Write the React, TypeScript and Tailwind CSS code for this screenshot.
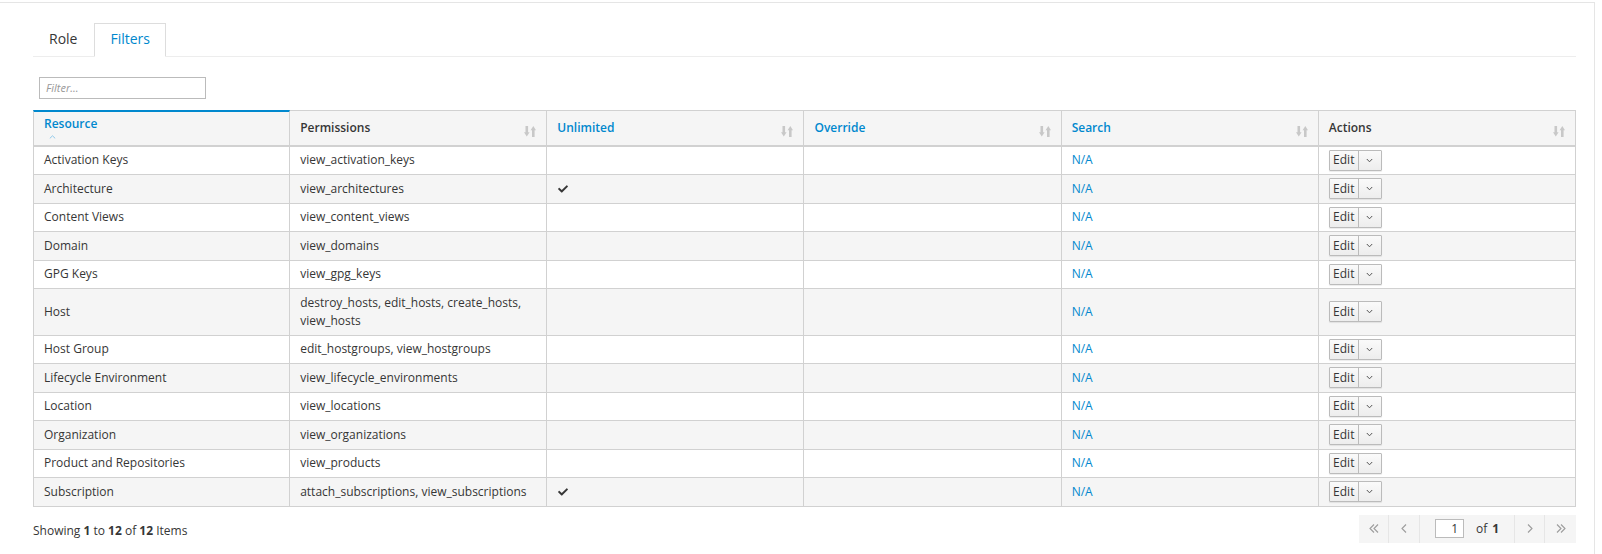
import React from "react";
import { FaCheck } from "react-icons/fa";

type Row = { resource: string; perms: string; unlimited?: boolean };

const rows: Row[] = [
  { resource: "Activation Keys", perms: "view_activation_keys" },
  { resource: "Architecture", perms: "view_architectures", unlimited: true },
  { resource: "Content Views", perms: "view_content_views" },
  { resource: "Domain", perms: "view_domains" },
  { resource: "GPG Keys", perms: "view_gpg_keys" },
  { resource: "Host", perms: "destroy_hosts, edit_hosts, create_hosts, view_hosts" },
  { resource: "Host Group", perms: "edit_hostgroups, view_hostgroups" },
  { resource: "Lifecycle Environment", perms: "view_lifecycle_environments" },
  { resource: "Location", perms: "view_locations" },
  { resource: "Organization", perms: "view_organizations" },
  { resource: "Product and Repositories", perms: "view_products" },
  { resource: "Subscription", perms: "attach_subscriptions, view_subscriptions", unlimited: true },
];

function SortIcon() {
  return (
    <svg width="12" height="11" viewBox="0 0 12 11" className="shrink-0 mt-[8px]" fill="#c8c8c8">
      <rect x="1.5" y="0" width="2.6" height="7" />
      <polygon points="0,6.3 5.6,6.3 2.8,10.6" />
      <polygon points="6.6,4.3 12,4.3 9.3,0" />
      <rect x="8" y="3.8" width="2.6" height="7.2" />
    </svg>
  );
}

function HeaderCell({ label, blue }: { label: string; blue?: boolean }) {
  return (
    <th className="bg-[#f5f5f5] border-t border-t-[#d1d1d1] border-b-2 border-b-[#d1d1d1] border-r border-r-[#d1d1d1] px-[10px] py-[7.35px] text-left align-middle font-semibold">
      <div className="flex items-center justify-between">
        <span className={blue ? "text-[#0088ce] leading-[18px]" : "text-[#363636] leading-[18px]"}>{label}</span>
        <SortIcon />
      </div>
    </th>
  );
}

function EditButton() {
  return (
    <div className="h-[18px] flex items-center">
      <div className="flex h-[21px] border border-[#bbbbbb] rounded-[1px] bg-gradient-to-b from-[#fafafa] to-[#ededed] shadow-[0_1px_1px_rgba(3,3,3,0.08)]">
        <div className="w-[29px] flex items-center justify-center text-[12px] font-medium text-[#363636] border-r border-[#bbbbbb] leading-none">
          Edit
        </div>
        <div className="w-[22px] flex items-center justify-center">
          <svg width="7" height="5" viewBox="0 0 7 5">
            <polyline points="0.8,1 3.5,3.8 6.2,1" fill="none" stroke="#555" strokeWidth="1" />
          </svg>
        </div>
      </div>
    </div>
  );
}

function Chev({ dir, double }: { dir: "l" | "r"; double?: boolean }) {
  const single = dir === "l" ? "5,0.5 1,4.5 5,8.5" : "1,0.5 5,4.5 1,8.5";
  const second = dir === "l" ? "9,0.5 5,4.5 9,8.5" : "5,0.5 9,4.5 5,8.5";
  return (
    <svg width={double ? 10 : 6} height="9" viewBox={double ? "0 0 10 9" : "0 0 6 9"}>
      <polyline points={single} fill="none" stroke="#9c9c9c" strokeWidth="1.1" />
      {double && <polyline points={second} fill="none" stroke="#9c9c9c" strokeWidth="1.1" />}
    </svg>
  );
}

export default function App() {
  return (
    <div className="font-['Open_Sans',sans-serif] text-[12px] text-[#363636] bg-white w-[1602px] h-[554px] overflow-hidden">
      <div className="w-[1595px] h-[552px] mt-[2px] border-t border-r border-[#e5e5e5] pl-[33px] pr-[18px] pt-[20px]">
        {/* Tabs */}
        <div className="flex border-b border-[#ededed]">
          <div className="-mb-px border border-transparent pl-[15px] pr-[16px] pt-[6px] pb-[8px] text-[14px] leading-[18px] text-[#363636]">
            Role
          </div>
          <div className="-mb-px border border-[#dddddd] border-b-white bg-white px-[15px] pt-[6px] pb-[8px] text-[14px] leading-[18px] text-[#0088ce]">
            Filters
          </div>
        </div>

        {/* Filter input */}
        <div className="mt-[20px] pl-[6px]">
          <div className="w-[167px] h-[22px] border border-[#bbbbbb] flex items-center pl-[6px]">
            <span className="italic text-[11px] text-[#999999]">Filter...</span>
          </div>
        </div>

        {/* Table */}
        <table className="mt-[11px] w-[1543px] table-fixed border-separate border-spacing-0">
          <thead>
            <tr>
              <th className="bg-[#f5f5f5] border-t-2 border-t-[#0088ce] border-b-2 border-b-[#d1d1d1] border-l border-l-[#d1d1d1] border-r border-r-[#d1d1d1] px-[10px] py-[2.85px] text-left align-middle font-semibold">
                <div className="flex flex-col">
                  <span className="text-[#0088ce] leading-[18px]">Resource</span>
                  <span className="h-[8px] flex items-center pl-[5px]">
                    <svg width="7" height="4" viewBox="0 0 7 4">
                      <polyline points="0.8,3.4 3.5,0.8 6.2,3.4" fill="none" stroke="#8fc8ea" strokeWidth="1" />
                    </svg>
                  </span>
                </div>
              </th>
              <HeaderCell label="Permissions" />
              <HeaderCell label="Unlimited" blue />
              <HeaderCell label="Override" blue />
              <HeaderCell label="Search" blue />
              <HeaderCell label="Actions" />
            </tr>
          </thead>
          <tbody>
            {rows.map((r, i) => {
              const bg = i % 2 === 1 ? "bg-[#f5f5f5]" : "bg-white";
              const td = "border-b border-r border-[#d1d1d1] px-[10px] py-[4.75px] leading-[18px] align-middle";
              return (
                <tr key={r.resource} className={bg}>
                  <td className={td + " border-l"}>{r.resource}</td>
                  <td className={td}>{r.perms}</td>
                  <td className={td}>
                    {r.unlimited ? (
                      <div className="h-[18px] flex items-center pl-[1px]">
                        <FaCheck size={10} color="#363636" />
                      </div>
                    ) : null}
                  </td>
                  <td className={td}></td>
                  <td className={td}>
                    <span className="text-[#0088ce]">N/A</span>
                  </td>
                  <td className={td}>
                    <EditButton />
                  </td>
                </tr>
              );
            })}
          </tbody>
        </table>

        {/* Footer */}
        <div className="mt-[8px] flex items-center justify-between">
          <div className="pt-[4px] leading-[18px]">
            Showing <b className="font-bold">1</b> to <b className="font-bold">12</b> of{" "}
            <b className="font-bold">12</b> Items
          </div>
          <div className="flex h-[28px] bg-[#f5f5f5]">
            <div className="w-[30px] flex items-center justify-center border-r border-[#e6e6e6]">
              <Chev dir="l" double />
            </div>
            <div className="w-[30px] flex items-center justify-center">
              <Chev dir="l" />
            </div>
            <div className="w-[96px] flex items-center border-l border-r border-[#e6e6e6] pl-[15px]">
              <div className="w-[29px] h-[19px] bg-white border border-[#bbbbbb] flex items-center justify-end pr-[5px] text-[12px] leading-none">
                1
              </div>
              <span className="ml-[12px]">of</span>
              <b className="ml-[5px] font-bold">1</b>
            </div>
            <div className="w-[30px] flex items-center justify-center border-r border-[#e6e6e6]">
              <Chev dir="r" />
            </div>
            <div className="w-[31px] flex items-center justify-center">
              <Chev dir="r" double />
            </div>
          </div>
        </div>
      </div>
    </div>
  );
}
